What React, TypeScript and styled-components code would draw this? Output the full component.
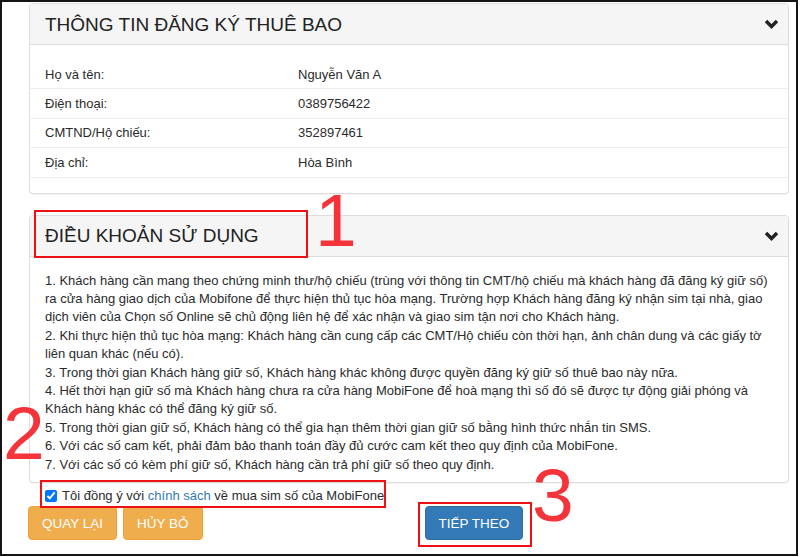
import React, { useState } from "react";
import styled, { createGlobalStyle } from "styled-components";

const GlobalStyle = createGlobalStyle`
  html, body {
    margin: 0;
    padding: 0;
    background: #ffffff;
  }
  body {
    font-family: "Liberation Sans", Arial, "Noto Sans", sans-serif;
    color: #333333;
  }
  * {
    box-sizing: border-box;
  }
`;

// subscriber info rows
const subscriber = [
  { label: "Họ và tên:", value: "Nguyễn Văn A" },
  { label: "Điện thoại:", value: "0389756422" },
  { label: "CMTND/Hộ chiếu:", value: "352897461" },
  { label: "Địa chỉ:", value: "Hòa Bình" },
];

// terms, one entry per rendered line
const terms = [
  "1. Khách hàng cần mang theo chứng minh thư/hộ chiếu (trùng với thông tin CMT/hộ chiếu mà khách hàng đã đăng ký giữ số)",
  "ra cửa hàng giao dịch của Mobifone để thực hiện thủ tục hòa mạng. Trường hợp Khách hàng đăng ký nhận sim tại nhà, giao",
  "dịch viên của Chọn số Online sẽ chủ động liên hệ để xác nhận và giao sim tận nơi cho Khách hàng.",
  "2. Khi thực hiện thủ tục hòa mạng: Khách hàng cần cung cấp các CMT/Hộ chiếu còn thời hạn, ảnh chân dung và các giấy tờ",
  "liên quan khác (nếu có).",
  "3. Trong thời gian Khách hàng giữ số, Khách hàng khác không được quyền đăng ký giữ số thuê bao này nữa.",
  "4. Hết thời hạn giữ số mà Khách hàng chưa ra cửa hàng MobiFone để hoà mạng thì số đó sẽ được tự động giải phóng và",
  "Khách hàng khác có thể đăng ký giữ số.",
  "5. Trong thời gian giữ số, Khách hàng có thể gia hạn thêm thời gian giữ số bằng hình thức nhắn tin SMS.",
  "6. Với các số cam kết, phải đảm bảo thanh toán đầy đủ cước cam kết theo quy định của MobiFone.",
  "7. Với các số có kèm phí giữ số, Khách hàng cần trả phí giữ số theo quy định.",
];

const Chevron = () => (
  <svg width="15" height="10" viewBox="0 0 15 10">
    <polyline
      points="2,2 7.5,7.5 13,2"
      fill="none"
      stroke="#222"
      strokeWidth="3.4"
      strokeLinejoin="miter"
    />
  </svg>
);

const App = () => {
  const [agreed, setAgreed] = useState(true);

  return (
    <>
      <GlobalStyle />
      <Frame>
        <Panel>
          <PanelHeader>
            <PanelTitle>THÔNG TIN ĐĂNG KÝ THUÊ BAO</PanelTitle>
            <Chevron />
          </PanelHeader>
          <InfoBody>
            {subscriber.map((row) => (
              <InfoRow key={row.label}>
                <InfoCell>{row.label}</InfoCell>
                <InfoCell>{row.value}</InfoCell>
              </InfoRow>
            ))}
          </InfoBody>
        </Panel>

        <Panel $gap>
          <PanelHeader>
            <PanelTitle>ĐIỀU KHOẢN SỬ DỤNG</PanelTitle>
            <Chevron />
          </PanelHeader>
          <TermsBody>
            {terms.map((line, i) => (
              <TermLine key={i}>{line}</TermLine>
            ))}
          </TermsBody>
        </Panel>

        <AgreeRow>
          <input
            type="checkbox"
            checked={agreed}
            onChange={(e) => setAgreed(e.target.checked)}
          />
          <span>
            Tôi đồng ý với <PolicyLink href="#">chính sách</PolicyLink> về mua sim số của MobiFone
          </span>
        </AgreeRow>

        <ButtonRow>
          <Button $variant="warning">QUAY LẠI</Button>
          <Button $variant="warning">HỦY BỎ</Button>
          <Button $variant="primary" $push>
            TIẾP THEO
          </Button>
        </ButtonRow>

        {/* tutorial annotations drawn over the form */}
        <Marker style={{ left: 32, top: 208, width: 274, height: 48 }} />
        <Marker style={{ left: 38, top: 478, width: 346, height: 28 }} />
        <Marker style={{ left: 416, top: 500, width: 114, height: 45 }} />
        <StepNumber style={{ left: 313, top: 181 }}>1</StepNumber>
        <StepNumber style={{ left: 1, top: 394 }}>2</StepNumber>
        <StepNumber style={{ left: 530, top: 456 }}>3</StepNumber>
      </Frame>
    </>
  );
};

export default App;

const Frame = styled.div`
  position: relative;
  width: 798px;
  height: 556px;
  border: 2px solid #141414;
  padding: 1px 0 0 27px;
  overflow: hidden;
  background: #ffffff;
`;

const Panel = styled.section<{ $gap?: boolean }>`
  width: 760px;
  margin-top: ${(p) => (p.$gap ? "21px" : "0")};
  background: #ffffff;
  border: 1px solid #dddddd;
  border-radius: 4px;
  box-shadow: 0 1px 1px rgba(0, 0, 0, 0.05);
`;

const PanelHeader = styled.div`
  display: flex;
  align-items: center;
  justify-content: space-between;
  height: 41px;
  padding: 0 9px 0 15px;
  background: #f5f5f5;
  border-bottom: 1px solid #dddddd;
  border-radius: 3px 3px 0 0;
`;

const PanelTitle = styled.h3`
  margin: 0;
  font-size: 19px;
  font-weight: normal;
  color: #222222;
  line-height: 1;
`;

const InfoBody = styled.div`
  padding: 15px 0 15px;
`;

const InfoRow = styled.div`
  display: grid;
  grid-template-columns: 253px 1fr;
  height: 29.4px;
  align-items: center;
  border-bottom: 1px solid #eeeeee;
`;

const InfoCell = styled.div`
  padding-left: 15px;
  font-size: 13px;
  color: #2b2b2b;
`;

const TermsBody = styled.div`
  padding: 15px 15px 8px;
  font-size: 13px;
  line-height: 18.4px;
  color: #2b2b2b;
`;

const TermLine = styled.div`
  white-space: nowrap;
`;

const AgreeRow = styled.label`
  display: flex;
  align-items: center;
  gap: 3px;
  height: 23px;
  padding: 2px 0 0 14px;
  font-size: 13px;
  color: #2b2b2b;

  input {
    width: 12px;
    height: 12px;
    margin: 0 2px 0 2px;
    accent-color: #0075ff;
  }
`;

const PolicyLink = styled.a`
  color: #337ab7;
  text-decoration: none;
`;

const ButtonRow = styled.div`
  display: flex;
  gap: 6px;
  margin-left: -1px;
`;

const Button = styled.button<{ $variant: "warning" | "primary"; $push?: boolean }>`
  height: 34px;
  padding: 0 13px;
  margin-left: ${(p) => (p.$push ? "216px" : "0")};
  border: 1px solid ${(p) => (p.$variant === "primary" ? "#2e6da4" : "#eea236")};
  border-radius: 4px;
  background: ${(p) => (p.$variant === "primary" ? "#337ab7" : "#f0ad4e")};
  color: #ffffff;
  font-family: "Liberation Sans", Arial, sans-serif;
  font-size: 13.5px;
  cursor: pointer;
`;

const Marker = styled.div`
  position: absolute;
  border: 2px solid #ee1111;
  pointer-events: none;
`;

const StepNumber = styled.div`
  position: absolute;
  font-family: "Liberation Sans", Arial, sans-serif;
  font-size: 75px;
  line-height: 1;
  color: #f5333a;
  pointer-events: none;
`;
